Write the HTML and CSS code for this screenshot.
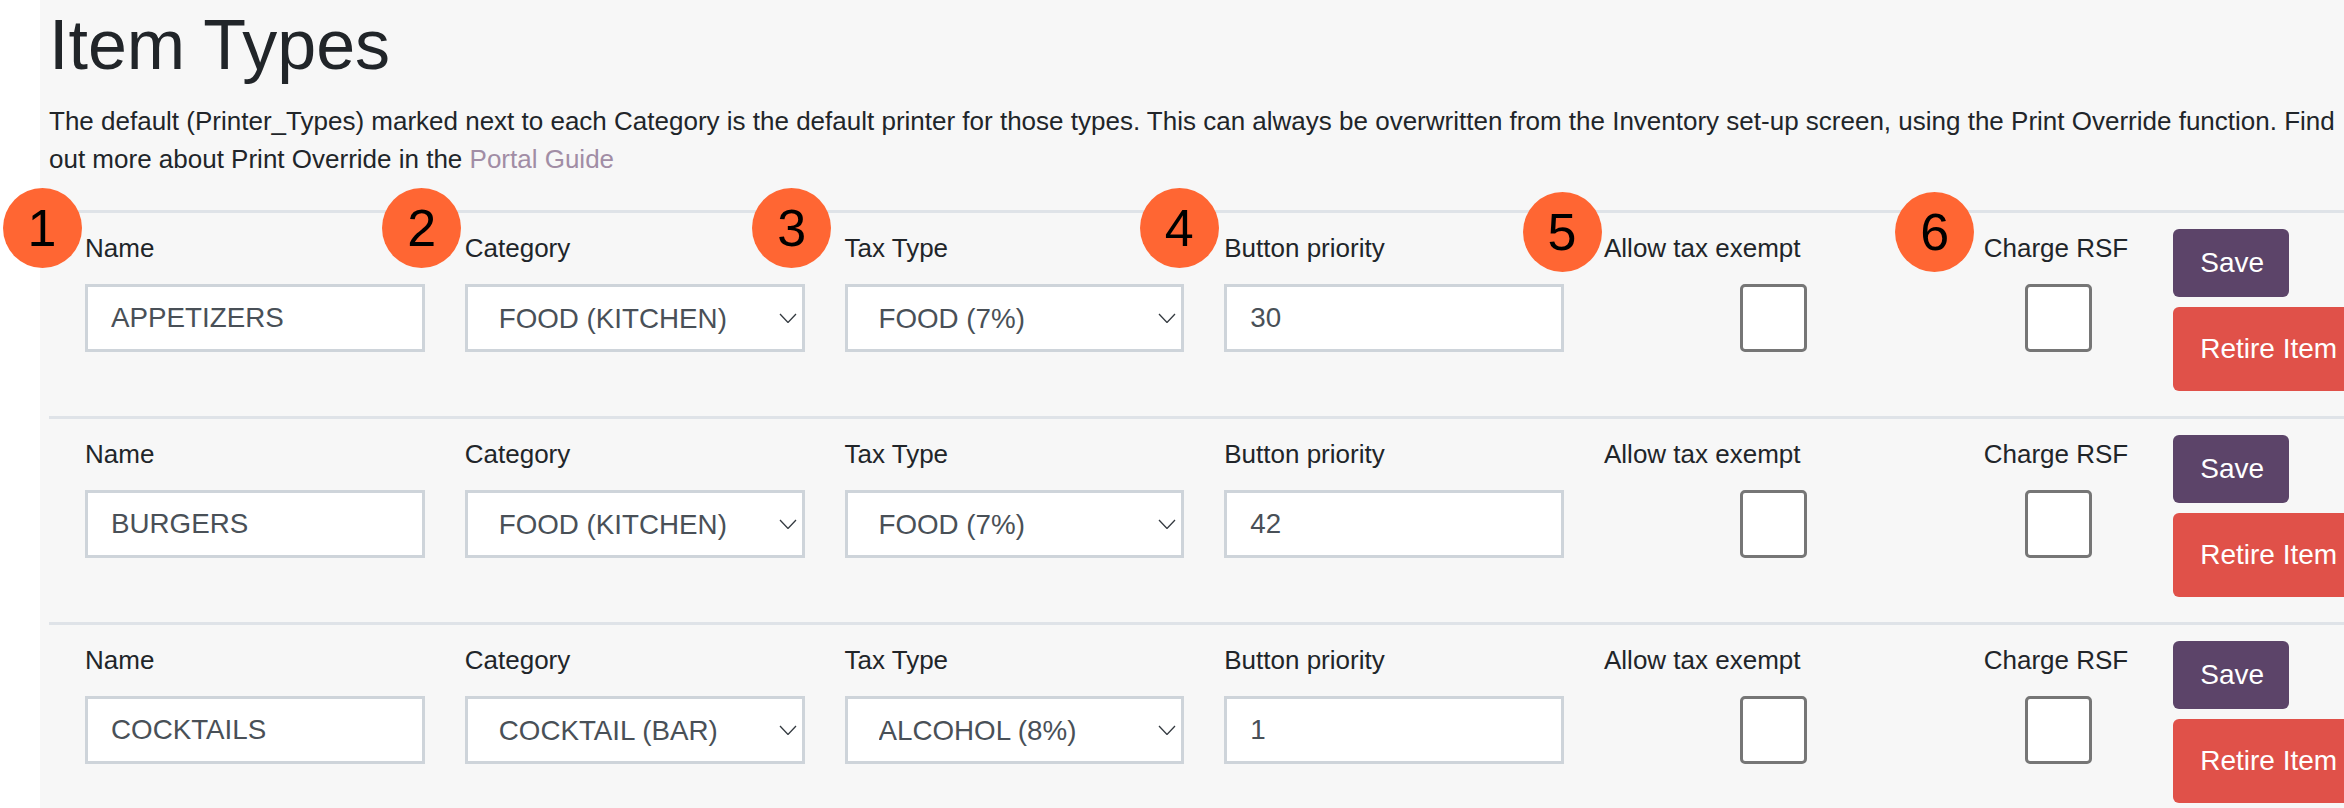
FILE: index.html
```html
<!DOCTYPE html>
<html lang="en">
<head>
<meta charset="utf-8">
<title>Item Types</title>
<link rel="stylesheet" href="styles.css">
</head>
<body>
<main class="page">
  <h1 class="title">Item Types</h1>
  <p class="intro">The default (Printer_Types) marked next to each Category is the default printer for those types. This can always be overwritten from the Inventory set-up screen, using the Print Override function. Find out more about Print Override in the <a class="link" href="#">Portal Guide</a></p>

  <form class="row">
    <div class="col"><span class="badge b1">1</span><label class="label">Name</label><input class="field" value="APPETIZERS"></div>
    <div class="col"><span class="badge b2">2</span><label class="label">Category</label><div class="select-wrap"><select class="field select"><option>FOOD (KITCHEN)</option></select><svg class="chev" viewBox="0 0 18 10"><path d="M1 1 L9 9.5 L17 1"/></svg></div></div>
    <div class="col"><span class="badge b3">3</span><label class="label">Tax Type</label><div class="select-wrap"><select class="field select"><option>FOOD (7%)</option></select><svg class="chev" viewBox="0 0 18 10"><path d="M1 1 L9 9.5 L17 1"/></svg></div></div>
    <div class="col"><span class="badge b4">4</span><label class="label">Button priority</label><input class="field" value="30"></div>
    <div class="col"><span class="badge b5">5</span><label class="label">Allow tax exempt</label><span class="check"></span></div>
    <div class="col col-short"><span class="badge b6">6</span><label class="label">Charge RSF</label><span class="check"></span></div>
    <div class="actions"><button class="btn save" type="button">Save</button><button class="btn retire" type="button">Retire Item Type</button></div>
  </form>

  <form class="row">
    <div class="col"><label class="label">Name</label><input class="field" value="BURGERS"></div>
    <div class="col"><label class="label">Category</label><div class="select-wrap"><select class="field select"><option>FOOD (KITCHEN)</option></select><svg class="chev" viewBox="0 0 18 10"><path d="M1 1 L9 9.5 L17 1"/></svg></div></div>
    <div class="col"><label class="label">Tax Type</label><div class="select-wrap"><select class="field select"><option>FOOD (7%)</option></select><svg class="chev" viewBox="0 0 18 10"><path d="M1 1 L9 9.5 L17 1"/></svg></div></div>
    <div class="col"><label class="label">Button priority</label><input class="field" value="42"></div>
    <div class="col"><label class="label">Allow tax exempt</label><span class="check"></span></div>
    <div class="col col-short"><label class="label">Charge RSF</label><span class="check"></span></div>
    <div class="actions"><button class="btn save" type="button">Save</button><button class="btn retire" type="button">Retire Item Type</button></div>
  </form>

  <form class="row">
    <div class="col"><label class="label">Name</label><input class="field" value="COCKTAILS"></div>
    <div class="col"><label class="label">Category</label><div class="select-wrap"><select class="field select"><option>COCKTAIL (BAR)</option></select><svg class="chev" viewBox="0 0 18 10"><path d="M1 1 L9 9.5 L17 1"/></svg></div></div>
    <div class="col"><label class="label">Tax Type</label><div class="select-wrap"><select class="field select"><option>ALCOHOL (8%)</option></select><svg class="chev" viewBox="0 0 18 10"><path d="M1 1 L9 9.5 L17 1"/></svg></div></div>
    <div class="col"><label class="label">Button priority</label><input class="field" value="1"></div>
    <div class="col"><label class="label">Allow tax exempt</label><span class="check"></span></div>
    <div class="col col-short"><label class="label">Charge RSF</label><span class="check"></span></div>
    <div class="actions"><button class="btn save" type="button">Save</button><button class="btn retire" type="button">Retire Item Type</button></div>
  </form>
</main>
</body>
</html>
```
FILE: styles.css
```css
* { box-sizing: border-box; }
html, body { margin: 0; height: 808px; background: #fff; }
html { overflow: hidden; }
body { font-family: "Liberation Sans", Arial, sans-serif; color: #212529; padding-left: 40px; }
.page { width: 2304px; height: 808px; background: #f7f7f7; padding-left: 9px; }
.title { margin: 0; padding-top: 4px; font-size: 70px; font-weight: 400; line-height: 82px; height: 90px; }
.intro { margin: 13px 0 0; width: 2295px; font-size: 26px; line-height: 37.5px; height: 75px; }
.link { color: #a18da5; text-decoration: none; }
.row { display: flex; gap: 40px; width: 2400px; height: 206px; padding: 16px 0 0 36px; border-top: 3px solid #dfe3e8; }
.intro + .row { margin-top: 32px; }
.col { width: 339.75px; flex: none; display: flex; flex-direction: column; position: relative; }
.col-short { width: 149.5px; }
.label { display: block; font-size: 26px; line-height: 30px; height: 51px; margin-top: 4px; }
.field { display: block; width: 100%; height: 68px; border: 3px solid #ced4da; border-radius: 0; background: #fff; color: #495057; font: 400 27.75px "Liberation Sans", Arial, sans-serif; padding: 0 23px; margin: 0; outline: 0; }
.select-wrap { position: relative; }
.select { appearance: none; -webkit-appearance: none; padding-left: 31px; padding-right: 40px; }
.chev { position: absolute; right: 8px; top: 29px; width: 18px; height: 10px; fill: none; stroke: #343a40; stroke-width: 1.3; }
.check { display: block; width: 67px; height: 68px; margin: 0 auto; background: #fff; border: 3px solid #767676; border-radius: 5px; }
.actions { display: flex; flex-direction: column; gap: 10px; align-items: flex-start; width: 230px; flex: none; }
.btn { border: 0; border-radius: 6px; color: #fff; font: 400 28px "Liberation Sans", Arial, sans-serif; padding: 0 27px; text-align: left; white-space: nowrap; flex: none; }
.save { background: #5c4469; height: 68px; width: 116px; }
.retire { background: #e05149; height: 84px; width: 240px; }
.badge { position: absolute; top: -41px; width: 79px; height: 80px; border-radius: 50%; background: #ff6633; color: #000; font-size: 52px; line-height: 81px; text-align: center; z-index: 2; }
.b1 { left: -82.5px; }
.b2 { left: -82.5px; }
.b3 { left: -92.3px; }
.b4 { left: -84.5px; }
.b5 { left: -81.5px; top: -37px; }
.b6 { left: -88.5px; top: -37px; }
```
